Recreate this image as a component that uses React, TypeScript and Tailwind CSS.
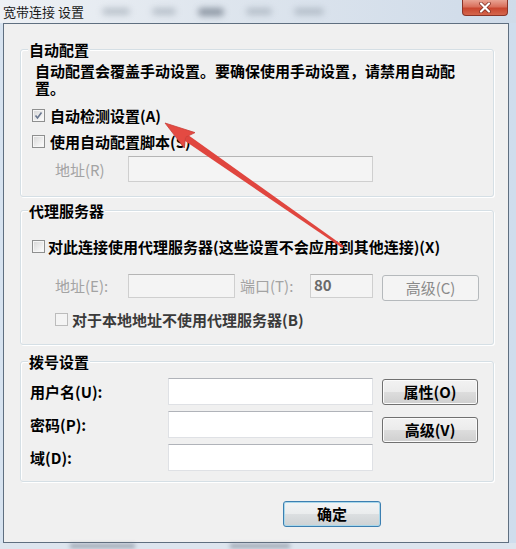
import React from "react";

const txt = "text-[15px] leading-[17px] font-bold";
const groupBox =
  "mx-[16px] w-[474px] border border-[#d5dfe5] rounded-[3px] shadow-[inset_1px_1px_0_#ffffff,1px_1px_0_#ffffff]";
const legend =
  "-mt-[9px] ml-[7px] w-fit bg-[#f0f0f0] px-[1px] text-[15px] leading-[17px] font-bold text-black";

function Checkbox({ checked = false, disabled = false }: { checked?: boolean; disabled?: boolean }) {
  return (
    <div
      className={
        disabled
          ? "w-[13px] h-[13px] shrink-0 border border-[#bcbcbc] bg-[#f4f4f4]"
          : "w-[13px] h-[13px] shrink-0 border border-[#8e8f8f] bg-[linear-gradient(135deg,#d6d6d6,#ffffff)] shadow-[inset_0_0_0_1px_#f6f6f6]"
      }
    >
      {checked && (
        <svg width="11" height="11" viewBox="0 0 11 11">
          <path d="M2.5 5.5 L4.5 8 L8.5 2.5" fill="none" stroke="#6b7890" strokeWidth="1.6" />
        </svg>
      )}
    </div>
  );
}

function Input({ className, disabled = false, children }: { className: string; disabled?: boolean; children?: React.ReactNode }) {
  return (
    <div
      className={
        (disabled
          ? "border border-[#cfcfcf] border-t-[#b5b5b5] bg-[#f4f4f4] "
          : "border border-[#dfe1e5] border-t-[#b0b3b9] bg-white ") + className
      }
    >
      {children}
    </div>
  );
}

function Button({ className, label, disabled = false, primary = false }: { className: string; label: string; disabled?: boolean; primary?: boolean }) {
  let style =
    "flex items-center justify-center rounded-[3px] border border-[#707070] bg-[linear-gradient(#f2f2f2_0%,#ebebeb_50%,#dddddd_50%,#cfcfcf_100%)] shadow-[inset_0_0_0_1px_#fbfbfb] text-black font-bold";
  if (disabled)
    style =
      "flex items-center justify-center rounded-[3px] border border-[#b5b9bc] bg-[#f4f4f4] text-[#8a8a8a] font-normal";
  if (primary)
    style =
      "flex items-center justify-center rounded-[3px] border border-[#3c7fb1] bg-[linear-gradient(#f2f4f5_0%,#eaeced_50%,#dcdfe1_50%,#ced2d4_100%)] shadow-[inset_0_0_0_1px_#a9d7ea] text-black font-bold";
  return <div className={style + " text-[15px] " + className}>{label}</div>;
}

export default function App() {
  return (
    <div className="relative w-[516px] h-[549px] overflow-hidden bg-[linear-gradient(90deg,#d7e3f0,#c9d9ec_50%,#cfdded)] font-['Noto_Sans_CJK_SC','Noto_Sans',sans-serif] text-black">
      {/* title bar */}
      <div className="h-[23px] flex items-start justify-between bg-[linear-gradient(90deg,#eef1f5_0%,#dfe6ee_40%,#cfdbe9_100%)]">
        <div className="flex items-start">
          <span className="ml-[3px] mt-[3px] text-[13px] leading-[17px] text-[#1a1a1a]">宽带连接 设置</span>
          <div className="ml-[18px] mt-[8px] flex gap-[22px]">
            <span className="w-[28px] h-[7px] rounded-full bg-[#8f9aa6] opacity-50 blur-[3px]"></span>
            <span className="w-[24px] h-[7px] rounded-full bg-[#8f9aa6] opacity-50 blur-[3px]"></span>
            <span className="w-[26px] h-[8px] rounded-full bg-[#6d7886] opacity-70 blur-[3px]"></span>
            <span className="w-[26px] h-[7px] rounded-full bg-[#8f9aa6] opacity-50 blur-[3px]"></span>
            <span className="w-[30px] h-[7px] rounded-full bg-[#8f9aa6] opacity-50 blur-[3px]"></span>
          </div>
        </div>
        <div className="mr-[8px] w-[46px] h-[16px] rounded-b-[4px] border border-t-0 border-[#8a3428] bg-[linear-gradient(#e9a393_0%,#d9705c_45%,#c9462f_55%,#d4664c_100%)] flex items-center justify-center">
          <svg width="14" height="11" viewBox="0 0 14 11">
            <path d="M3 1.5 L11 9.5 M11 1.5 L3 9.5" stroke="#7a2a1e" strokeWidth="3.6" strokeLinecap="round" />
            <path d="M3 1.5 L11 9.5 M11 1.5 L3 9.5" stroke="#ffffff" strokeWidth="2.2" strokeLinecap="round" />
          </svg>
        </div>
      </div>

      {/* dialog panel */}
      <div className="ml-[3px] w-[506px] h-[520px] border border-[#5f6f80] bg-[#f0f0f0]">
        {/* 自动配置 */}
        <div className={groupBox + " mt-[25px] pb-[14px]"}>
          <div className={legend}>自动配置</div>
          <p className={txt + " mt-[4px] ml-[14px] w-[428px]"}>
            自动配置会覆盖手动设置。要确保使用手动设置，请禁用自动配置。
          </p>
          <div className={txt + " mt-[9px] ml-[11px] h-[20px] flex items-center gap-[5px]"}>
            <Checkbox checked />
            <span>自动检测设置(A)</span>
          </div>
          <div className={txt + " mt-[6px] ml-[11px] h-[20px] flex items-center gap-[5px]"}>
            <Checkbox />
            <span>使用自动配置脚本(S)</span>
          </div>
          <div className="mt-[5px] h-[26px] flex items-center">
            <span className="ml-[34px] w-[73px] text-[15px] leading-[17px] text-[#a3a3a3]">地址(R)</span>
            <Input disabled className="w-[245px] h-[26px]" />
          </div>
        </div>

        {/* 代理服务器 */}
        <div className={groupBox + " mt-[13px] pb-[15px]"}>
          <div className={legend}>代理服务器</div>
          <div className={txt + " mt-[17px] ml-[11px] h-[20px] flex items-center gap-[3px]"}>
            <Checkbox />
            <span>对此连接使用代理服务器(这些设置不会应用到其他连接)(X)</span>
          </div>
          <div className="mt-[18px] flex items-start">
            <span className="ml-[34px] w-[73px] h-[24px] text-[15px] leading-[24px] text-[#a3a3a3]">地址(E):</span>
            <Input disabled className="w-[107px] h-[24px]" />
            <span className="ml-[5px] w-[70px] h-[24px] text-[15px] leading-[24px] text-[#a3a3a3]">端口(T):</span>
            <Input disabled className="w-[63px] h-[24px] pl-[3px] text-[15px] leading-[20px] text-[#6a6a6a] font-bold">
              80
            </Input>
            <Button disabled label="高级(C)" className="ml-[9px] mt-[1px] w-[97px] h-[26px]" />
          </div>
          <div className="mt-[8px] ml-[34px] h-[20px] flex items-center gap-[4px] text-[15px] leading-[17px] font-bold text-[#3a3a3a]">
            <Checkbox disabled />
            <span>对于本地地址不使用代理服务器(B)</span>
          </div>
        </div>

        {/* 拨号设置 */}
        <div className={groupBox + " mt-[16px] pb-[10px]"}>
          <div className={legend}>拨号设置</div>
          <div className="mt-[8px] flex items-start">
            <div className="flex flex-col gap-[6px]">
              <div className="flex items-center h-[27px]">
                <span className={txt + " ml-[9px] w-[138px]"}>用户名(U):</span>
                <Input className="w-[205px] h-[27px]" />
              </div>
              <div className="flex items-center h-[27px]">
                <span className={txt + " ml-[9px] w-[138px]"}>密码(P):</span>
                <Input className="w-[205px] h-[27px]" />
              </div>
              <div className="flex items-center h-[27px]">
                <span className={txt + " ml-[9px] w-[138px]"}>域(D):</span>
                <Input className="w-[205px] h-[27px]" />
              </div>
            </div>
            <div className="ml-[9px] mt-[1px] flex flex-col gap-[12px]">
              <Button label="属性(O)" className="w-[96px] h-[26px]" />
              <Button label="高级(V)" className="w-[96px] h-[26px]" />
            </div>
          </div>
        </div>

        <Button primary label="确定" className="ml-[279px] mt-[19px] w-[98px] h-[26px]" />
      </div>

      {/* bottom strip */}
      <div className="h-[6px] flex items-center bg-[#dde5ee]">
        <span className="ml-[70px] w-[65px] h-[4px] bg-[#6b7584] opacity-60 blur-[2px]"></span>
        <span className="ml-[95px] w-[60px] h-[4px] bg-[#6b7584] opacity-60 blur-[2px]"></span>
      </div>

      {/* red annotation arrow */}
      <svg className="absolute inset-0 pointer-events-none" width="516" height="549" viewBox="0 0 516 549">
        <polygon points="187.4,134.6 343.7,246 342.3,248 183.6,140" fill="#e0463f" />
        <polygon
          points="165,123 195,132.6 185.5,137.3 184.3,148"
          fill="#e44a42"
          stroke="#c9403a"
          strokeWidth="0.8"
          strokeLinejoin="round"
        />
      </svg>
    </div>
  );
}
